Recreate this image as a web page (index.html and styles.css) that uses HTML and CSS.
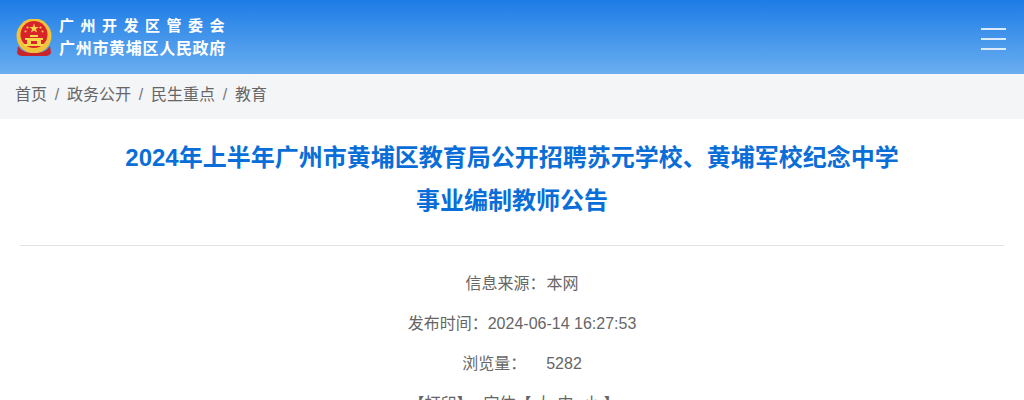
FILE: index.html
```html
<!DOCTYPE html>
<html lang="zh-CN">
<head>
  <meta charset="UTF-8" />
  <title>2024年上半年广州市黄埔区教育局公开招聘苏元学校、黄埔军校纪念中学事业编制教师公告</title>
  <link rel="stylesheet" href="styles.css">
</head>
<body>
  <header class="top-bar">
    <div class="brand">
      <svg class="emblem" viewBox="0 0 36 38" width="36" height="38">
        <circle cx="18" cy="17" r="17.5" fill="#f2c33a"/>
        <circle cx="18" cy="15.5" r="13.5" fill="#d8232a"/>
        <polygon points="18,4.5 19.2,8 22.8,8 19.9,10.1 21,13.6 18,11.5 15,13.6 16.1,10.1 13.2,8 16.8,8" fill="#f8d648"/>
        <circle cx="11.5" cy="8.5" r="1.1" fill="#f8d648"/>
        <circle cx="24.5" cy="8.5" r="1.1" fill="#f8d648"/>
        <circle cx="9.5" cy="12.5" r="1" fill="#f8d648"/>
        <circle cx="26.5" cy="12.5" r="1" fill="#f8d648"/>
        <path d="M14 16h8v2h-8z" fill="#f8d648"/>
        <path d="M9 19h18v2h-2v4h3v2H8v-2h3v-4H9z" fill="#f8d648"/>
        <path d="M15 22h6v3h-6z" fill="#d8232a"/>
        <path d="M2 27c4 6 9 7 16 7s12-1 16-7l1 7c-1 2-3 3-5 3H6c-2 0-4-1-5-3z" fill="#c9252b"/>
        <path d="M12 29h12v2H12z" fill="#f2c33a"/>
      </svg>
      <div class="brand-text">
        <div class="brand-line-1">广州开发区管委会</div>
        <div class="brand-line-2">广州市黄埔区人民政府</div>
      </div>
    </div>
    <div class="menu-btn">
      <span></span>
      <span></span>
      <span></span>
    </div>
  </header>

  <nav class="crumbs">
    <a href="#">首页</a><i>/</i><a href="#">政务公开</a><i>/</i><a href="#">民生重点</a><i>/</i><a href="#">教育</a>
  </nav>

  <main class="article">
    <h1 class="article-title">2024年上半年广州市黄埔区教育局公开招聘苏元学校、黄埔军校纪念中学<br>事业编制教师公告</h1>
    <div class="meta">
      <p class="meta-row">信息来源：<span class="meta-value">本网</span></p>
      <p class="meta-row">发布时间：2024-06-14 16:27:53</p>
      <p class="meta-row">浏览量：<span class="count">5282</span></p>
      <p class="tools"><span class="print">【打印】</span>字体【<span class="size-big">大</span><span class="size-mid">中</span><span class="size-small">小</span>】</p>
    </div>
  </main>
</body>
</html>
```

FILE: styles.css
```css
* {
  box-sizing: border-box;
}
html, body {
  height: 400px;
  overflow: hidden;
}
body {
  margin: 0;
  background: #fff;
  font-family: "Liberation Sans", "Noto Sans CJK SC", sans-serif;
  color: #666;
}
.top-bar {
  height: 74px;
  padding: 0 18px 0 16px;
  display: flex;
  align-items: center;
  justify-content: space-between;
  background: linear-gradient(180deg, #1d7ce6 0%, #6aaef0 100%);
}
.brand {
  display: flex;
  align-items: center;
  gap: 7px;
}
.emblem {
  display: block;
  margin-top: 2px;
}
.brand-text {
  color: #fff;
  font-weight: bold;
  line-height: 23px;
}
.brand-line-1 {
  font-size: 15px;
  letter-spacing: 6.5px;
}
.brand-line-2 {
  font-size: 16px;
  letter-spacing: .7px;
}
.menu-btn {
  width: 25px;
  margin-top: 4px;
  display: flex;
  flex-direction: column;
  gap: 8.3px;
}
.menu-btn span {
  height: 2px;
  background: #dcebfb;
}
.crumbs {
  height: 45px;
  padding: 0 15px;
  background: #f4f5f7;
  font-size: 16px;
  line-height: 41px;
}
.crumbs a {
  color: #666;
  text-decoration: none;
}
.crumbs i {
  margin: 0 7.75px;
  font-style: normal;
  color: #777;
}
.article {
  padding: 17px 20px 0;
}
.article-title {
  margin: 0;
  padding-bottom: 23px;
  border-bottom: 1px solid #e3e3e3;
  text-align: center;
  font-size: 24px;
  line-height: 43px;
  color: #0a6ed8;
}
.meta {
  padding-top: 18px;
  text-align: center;
  font-size: 16px;
  line-height: 40px;
}
.meta p {
  margin: 0;
}
.meta-row {
  padding-left: 20px;
}
.meta-value {
  margin-left: 1px;
}
.count {
  margin-left: 20px;
}
.tools {
  padding-left: 4px;
}
.print {
  margin-right: 11px;
}
.size-big {
  margin: 0 6px 0 4px;
}
.size-mid {
  margin-right: 10px;
}
.size-small {
  margin-right: 4px;
}
```
